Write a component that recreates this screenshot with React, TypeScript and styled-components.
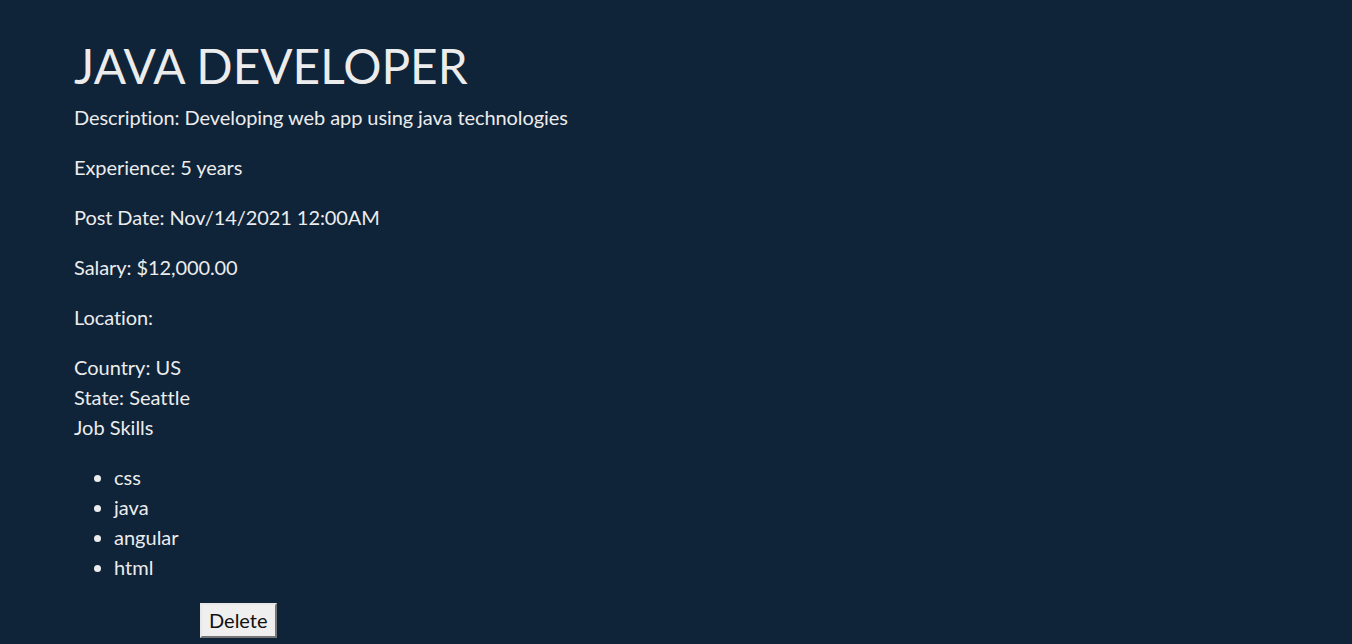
import React from "react";
import styled, { createGlobalStyle } from "styled-components";

const Global = createGlobalStyle`
  html, body { margin: 0; padding: 0; background: #0f2339; }
  body {
    font-family: Lato, "Open Sans", sans-serif;
    color: #ececec;
    font-variant-ligatures: none;
  }
  ::-webkit-scrollbar { width: 3px; }
  ::-webkit-scrollbar-track { background: #f1f1f1; }
  ::-webkit-scrollbar-thumb { background: #a8a8a8; }
`;

const Page = styled.div`
  padding: 30px 74px 40px;
  font-size: 20px;
  line-height: 30px;
`;

const Title = styled.h1`
  margin: 0;
  font-size: 47.8px;
  font-weight: 400;
  line-height: 72px;
`;

const Para = styled.p`
  margin: 0 0 20px;
  letter-spacing: -0.08px;
`;

const Line = styled.div``;

const Skills = styled.ul`
  margin: 20px 0 21px;
  padding-left: 40px;
`;

const Button = styled.button`
  margin-left: 126px;
  font-family: Lato, sans-serif;
  font-size: 20px;
  padding: 3px 7px 4px;
  background: #efefef;
  color: #111;
  border: 2px solid;
  border-color: #e8e8e8 #767676 #767676 #e8e8e8;
`;

export default function App() {
  return (
    <>
      <Global />
      <Page>
        <Title>JAVA DEVELOPER</Title>
        <Para>Description: Developing web app using java technologies</Para>
        <Para>Experience: 5 years</Para>
        <Para>Post Date: Nov/14/2021 12:00AM</Para>
        <Para>Salary: $12,000.00</Para>
        <Para>Location:</Para>
        <Line>Country: US</Line>
        <Line>State: Seattle</Line>
        <Line>Job Skills</Line>
        <Skills>
          <li>css</li>
          <li>java</li>
          <li>angular</li>
          <li>html</li>
        </Skills>
        <Button>Delete</Button>
      </Page>
    </>
  );
}
